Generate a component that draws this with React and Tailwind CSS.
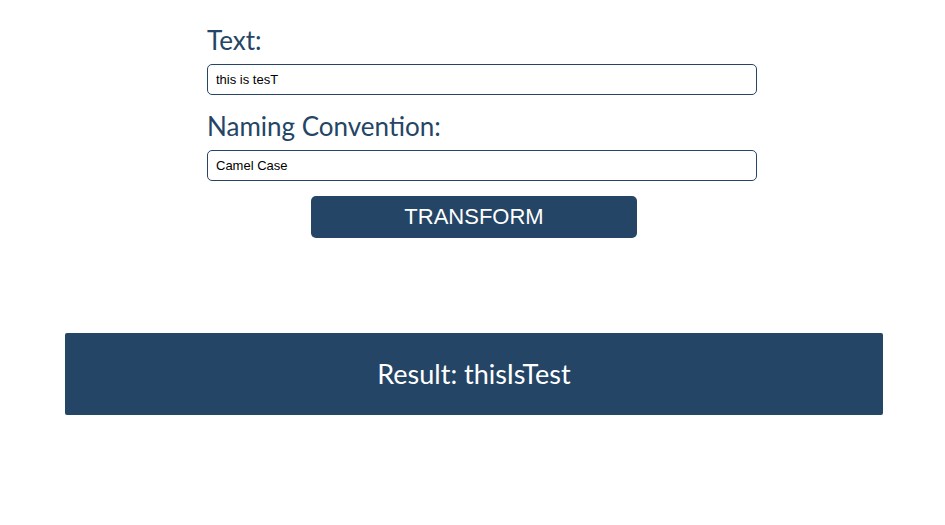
export default function App() {
  return (
    <div className="min-h-[525px] w-full bg-white">
      {/* Formulario */}
      <div className="ml-[207px] w-[550px] pt-[25px]">
        <label className="block font-['Lato',sans-serif] text-[26px] leading-[31px] text-[#244565]">
          Text:
        </label>
        <input
          type="text"
          defaultValue="this is tesT"
          className="mt-[8px] block h-[31px] w-full rounded-[5px] border border-[#244565] px-[8px] font-['Liberation_Sans',Arial,sans-serif] text-[13px] text-black outline-none"
        />
        <label className="mt-[16px] block font-['Lato',sans-serif] text-[26px] leading-[31px] text-[#244565]">
          Naming Convention:
        </label>
        <input
          type="text"
          defaultValue="Camel Case"
          className="mt-[8px] block h-[31px] w-full rounded-[5px] border border-[#244565] px-[8px] font-['Liberation_Sans',Arial,sans-serif] text-[13px] text-black outline-none"
        />
      </div>

      <button className="ml-[311px] mt-[15px] block h-[42px] w-[326px] rounded-[5px] bg-[#244565] pb-[2px] font-['Liberation_Sans',Arial,sans-serif] text-[22px] text-white">
        TRANSFORM
      </button>

      {/* Resultado */}
      <div className="ml-[65px] mt-[95px] flex h-[82px] w-[818px] items-center justify-center rounded-[2px] bg-[#244565]">
        <span className="font-['Lato',sans-serif] text-[27px] text-white">
          Result: thisIsTest
        </span>
      </div>
    </div>
  );
}
